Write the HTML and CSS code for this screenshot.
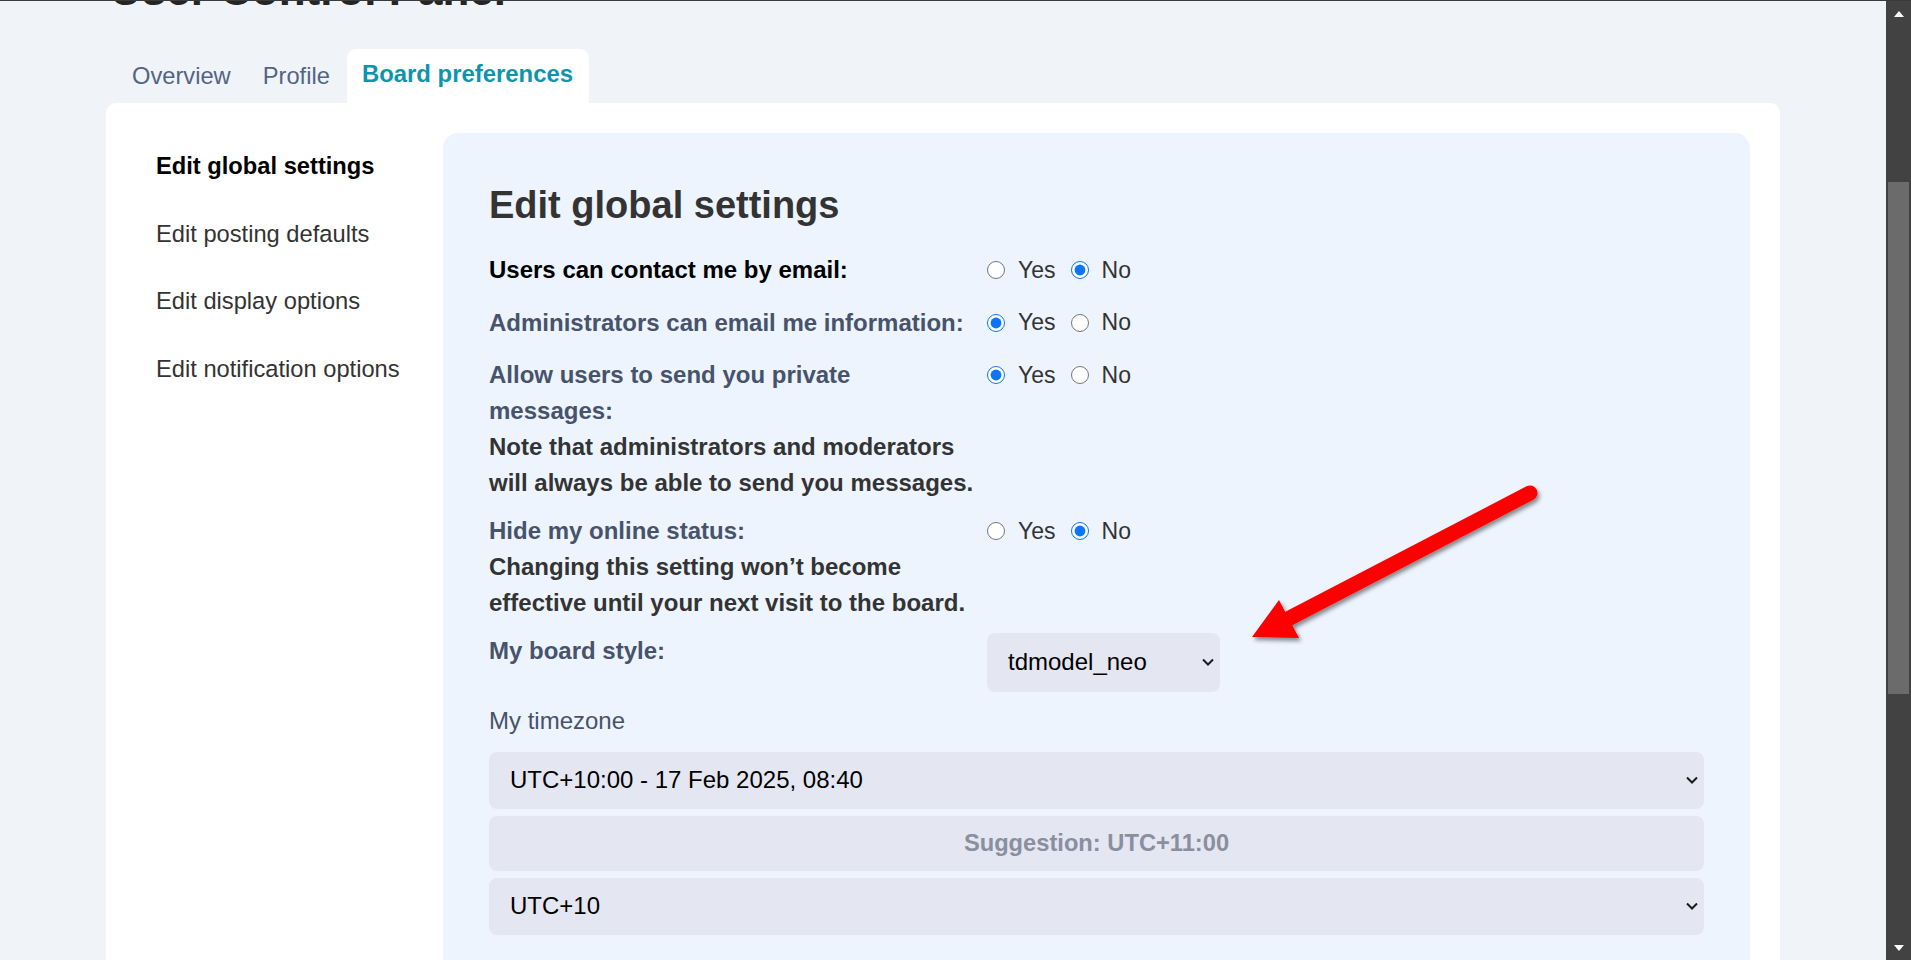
FILE: index.html
```html
<!DOCTYPE html>
<html lang="en">
<head>
<meta charset="utf-8">
<title>User Control Panel</title>
<link rel="stylesheet" href="styles.css">
</head>
<body>
<div class="window">
  <main class="viewport">
    <div class="page">
      <h1 class="page-title">User Control Panel</h1>
      <ul class="tabs">
        <li class="tab"><a href="#">Overview</a></li>
        <li class="tab"><a href="#">Profile</a></li>
        <li class="tab tab-active"><a href="#">Board preferences</a></li>
      </ul>
      <div class="panel">
        <ul class="side-nav">
          <li class="side-item side-item-active">Edit global settings</li>
          <li class="side-item">Edit posting defaults</li>
          <li class="side-item">Edit display options</li>
          <li class="side-item">Edit notification options</li>
        </ul>
        <section class="content">
          <h2 class="content-title">Edit global settings</h2>

          <dl class="field">
            <dt class="field-label field-label-strong">Users can contact me by email:</dt>
            <dd class="radios">
              <input type="radio" name="email" id="email-yes"><label for="email-yes" class="radio-text">Yes</label>
              <input type="radio" name="email" id="email-no" checked><label for="email-no" class="radio-text">No</label>
            </dd>
          </dl>

          <dl class="field">
            <dt class="field-label">Administrators can email me information:</dt>
            <dd class="radios">
              <input type="radio" name="massemail" id="mass-yes" checked><label for="mass-yes" class="radio-text">Yes</label>
              <input type="radio" name="massemail" id="mass-no"><label for="mass-no" class="radio-text">No</label>
            </dd>
          </dl>

          <dl class="field">
            <dt class="field-label">Allow users to send you private messages:<span class="explain">Note that administrators and moderators will always be able to send you messages.</span></dt>
            <dd class="radios">
              <input type="radio" name="pm" id="pm-yes" checked><label for="pm-yes" class="radio-text">Yes</label>
              <input type="radio" name="pm" id="pm-no"><label for="pm-no" class="radio-text">No</label>
            </dd>
          </dl>

          <dl class="field">
            <dt class="field-label">Hide my online status:<span class="explain">Changing this setting won’t become effective until your next visit to the board.</span></dt>
            <dd class="radios">
              <input type="radio" name="hide" id="hide-yes"><label for="hide-yes" class="radio-text">Yes</label>
              <input type="radio" name="hide" id="hide-no" checked><label for="hide-no" class="radio-text">No</label>
            </dd>
          </dl>

          <dl class="field field-last">
            <dt class="field-label">My board style:</dt>
            <dd>
              <div class="select select-small">
                <span>tdmodel_neo</span>
                <svg class="chev" width="12" height="8" viewBox="0 0 12 8"><path d="M1 1.5 L6 6.5 L11 1.5" fill="none" stroke="#1a1a1a" stroke-width="2"/></svg>
              </div>
            </dd>
          </dl>

          <div class="tz-label">My timezone</div>
          <div class="select select-wide">
            <span>UTC+10:00 - 17 Feb 2025, 08:40</span>
            <svg class="chev" width="12" height="8" viewBox="0 0 12 8"><path d="M1 1.5 L6 6.5 L11 1.5" fill="none" stroke="#1a1a1a" stroke-width="2"/></svg>
          </div>
          <div class="suggest">Suggestion: UTC+11:00</div>
          <div class="select select-wide">
            <span>UTC+10</span>
            <svg class="chev" width="12" height="8" viewBox="0 0 12 8"><path d="M1 1.5 L6 6.5 L11 1.5" fill="none" stroke="#1a1a1a" stroke-width="2"/></svg>
          </div>
        </section>
      </div>
    </div>
  </main>
  <div class="scrollbar">
    <div class="sb-btn"><span class="tri-up"></span></div>
    <div class="sb-track"><div class="sb-thumb"></div></div>
    <div class="sb-btn"><span class="tri-down"></span></div>
  </div>
</div>
<svg class="annotation" width="1911" height="960" viewBox="0 0 1911 960">
  <defs>
    <filter id="shadow" x="-20%" y="-20%" width="140%" height="140%">
      <feDropShadow dx="2" dy="3" stdDeviation="2" flood-color="#000" flood-opacity="0.45"/>
    </filter>
  </defs>
  <g filter="url(#shadow)" fill="#ff0000">
    <line x1="1530" y1="493" x2="1284" y2="621" stroke="#ff0000" stroke-width="15" stroke-linecap="round"/>
    <polygon points="1252,637 1279,600 1299,638"/>
  </g>
</svg>
</body>
</html>
```

FILE: styles.css
```css
html, body {
  margin: 0;
  padding: 0;
}

body {
  font-family: "Liberation Sans", Arial, sans-serif;
  background: #f0f4f9;
  border-top: 1px solid #3a3a3a;
  height: 959px;
  overflow: hidden;
  position: relative;
}

.window {
  display: flex;
  height: 959px;
}

.viewport {
  flex: 1;
  overflow: hidden;
}

.page {
  width: 1674px;
  margin: 0 auto;
}

.page-title {
  font-size: 44px;
  line-height: 50px;
  font-weight: 700;
  color: #252525;
  margin: -36px 0 0 4px;
}

/* Tabs */
.tabs {
  list-style: none;
  margin: 34px 0 0 11px;
  padding: 0;
  display: flex;
  align-items: flex-end;
  gap: 2px;
  height: 54px;
}

.tab a {
  display: block;
  padding: 12px 15px;
  font-size: 23.7px;
  line-height: 30px;
  color: #536482;
  text-decoration: none;
}

.tab-active a {
  background: #fff;
  border-radius: 9px 9px 0 0;
  padding: 10px 16px 14px 15px;
  font-weight: 700;
  font-size: 23.9px;
  color: #0f94b0;
}

/* Panel */
.panel {
  background: #fff;
  border-radius: 10px 10px 0 0;
  padding: 30px 30px 30px 30px;
  display: flex;
}

.side-nav {
  list-style: none;
  margin: 0;
  padding: 0;
  width: 307px;
  flex: none;
}

.side-item {
  padding: 18px 20px;
  font-size: 23.7px;
  line-height: 31.5px;
  color: #333;
}

.side-item-active {
  font-weight: 700;
  color: #000;
}

.content {
  flex: 1;
  background: #edf4fe;
  border-radius: 15px 15px 0 0;
  padding: 49px 46px 80px;
}

.content-title {
  margin: 0 0 24px;
  font-size: 38px;
  line-height: 46px;
  font-weight: 700;
  color: #333;
}

/* Fields */
.field {
  display: grid;
  grid-template-columns: 487px 1fr;
  column-gap: 11px;
  margin: 0 0 12px;
}

.field-last {
  margin-bottom: 11px;
}

.field-label {
  font-size: 24px;
  line-height: 36px;
  font-weight: 700;
  color: #46536b;
}

.field-label-strong {
  color: #000;
}

.explain {
  display: block;
  color: #333;
}

.field dd {
  margin: 0;
}

.radios {
  display: flex;
  align-items: center;
  height: 36px;
  padding-bottom: 4.5px;
}

.radios input {
  width: 18px;
  height: 18px;
  margin: 0 13px 0 0;
  accent-color: #0b75f5;
}

.radio-text {
  font-size: 23px;
  color: #333;
  margin-right: 15px;
}

/* Selects */
.select {
  box-sizing: border-box;
  display: flex;
  align-items: center;
  justify-content: space-between;
  background: #e4e6f2;
  border-radius: 8px;
  padding: 0 6px 0 21px;
  font-size: 24px;
  color: #000;
}

.select-small {
  width: 233px;
  height: 58.5px;
}

.select-wide {
  height: 57px;
  margin-bottom: 7px;
}

.chev {
  flex: none;
}

.tz-label {
  font-size: 24px;
  line-height: 36px;
  color: #47526a;
  margin: 0 0 13px;
}

.suggest {
  display: flex;
  align-items: center;
  justify-content: center;
  height: 55px;
  background: #e4e6f2;
  border-radius: 8px;
  font-size: 23.7px;
  font-weight: 700;
  color: #8a8f9f;
  margin-bottom: 7px;
}

/* Scrollbar */
.scrollbar {
  width: 25px;
  flex: none;
  background: #424242;
  display: flex;
  flex-direction: column;
}

.sb-btn {
  height: 25px;
  display: flex;
  align-items: center;
  justify-content: center;
  flex: none;
}

.tri-up {
  width: 0;
  height: 0;
  border-left: 5.5px solid transparent;
  border-right: 5.5px solid transparent;
  border-bottom: 6px solid #fff;
}

.tri-down {
  width: 0;
  height: 0;
  border-left: 5.5px solid transparent;
  border-right: 5.5px solid transparent;
  border-top: 6px solid #fff;
}

.sb-track {
  flex: 1;
  padding-top: 156px;
}

.sb-thumb {
  height: 512px;
  margin: 0 2px;
  background: #6b6b6b;
}

/* Annotation arrow overlay */
.annotation {
  position: absolute;
  left: 0;
  top: -1px;
  pointer-events: none;
}
```
